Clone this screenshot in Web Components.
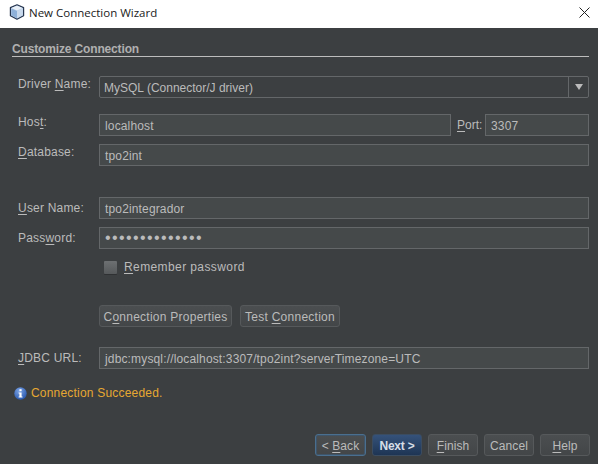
<!DOCTYPE html>
<html>
<head>
<meta charset="utf-8">
<title>New Connection Wizard</title>
<style>
  html, body { margin: 0; padding: 0; background: #3c3f41; }
  body { font-family: "Liberation Sans", Arial, sans-serif; font-size: 12px; color: #bbbbbb; }
  u { text-underline-offset: 2px; }
</style>
</head>
<body>
<template id="title-bar-tpl">
  <style>
    :host { display: flex; align-items: center; box-sizing: border-box; height: 28px; background: #fff; color: #1a1a1a; padding: 0 8px 4px 9px;
      font: 11.5px "Open Sans", "Noto Sans", sans-serif; }
    svg.logo { width: 16px; height: 16px; margin-right: 4px; }
    .name { flex: 1; }
    svg.close { width: 11px; height: 11px; }
  </style>
  <svg class="logo" viewBox="0 0 16 16">
    <path d="M8 .8 14.6 3.6V11.8L8 15.2 1.4 11.8V3.6Z" fill="#b9cfe8" stroke="#27364f" stroke-width="1.2" stroke-linejoin="round"/>
    <path d="M8 1.8 13.6 4 8 6.4 2.4 4Z" fill="#e9f0f8"/>
    <path d="M8 6.9V14.2L2.4 11.3V4.6Z" fill="#8eb0d8"/>
    <path d="M8 6.9V14.2L13.6 11.3V4.6Z" fill="#c9d9ec"/>
  </svg>
  <span class="name"><slot></slot></span>
  <svg class="close" viewBox="0 0 11 11"><path d="M.5.5 10.5 10.5M10.5.5.5 10.5" stroke="#222" stroke-width="1" fill="none"/></svg>
</template>

<template id="section-head-tpl">
  <style>
    :host { display: block; font-weight: bold; color: #b0b0b0; line-height: 14px; height: 14px; border-bottom: 1px solid #bdbdbd; letter-spacing: -.15px; }
  </style>
  <slot></slot>
</template>

<template id="form-row-tpl">
  <style>
    :host { display: flex; align-items: center; height: 22px; }
    .label { width: 87px; flex: none; padding-left: 6px; box-sizing: border-box; letter-spacing: .2px; }
    :host([raised]) .label { padding-bottom: 6px; }
    .body { flex: 1; display: flex; align-items: center; min-width: 0; }
  </style>
  <div class="label"><slot name="label"></slot></div>
  <div class="body"><slot></slot></div>
</template>

<template id="text-box-tpl">
  <style>
    :host { display: block; flex: 1; box-sizing: border-box; height: 22px; line-height: 22px; padding-left: 5px;
      background: #45494a; border: 1px solid #646769; color: #bbbbbb; white-space: nowrap; overflow: hidden; letter-spacing: .15px; }
    :host([secret]) { letter-spacing: 1.4px; font-size: 16px; line-height: 20px; }
  </style>
  <slot></slot>
</template>

<template id="combo-box-tpl">
  <style>
    :host { display: flex; flex: 1; box-sizing: border-box; height: 22px; background: #3c3f41; border: 1px solid #646769; border-radius: 2px; color: #bbbbbb; }
    .value { flex: 1; line-height: 22px; padding-left: 4px; }
    .arrow { width: 19px; border-left: 1px solid #646769; display: flex; align-items: center; justify-content: center; }
    .arrow svg { width: 8px; height: 6px; }
  </style>
  <div class="value"><slot></slot></div>
  <div class="arrow"><svg viewBox="0 0 8 6"><path d="M0 0H8L4 6Z" fill="#bbbbbb"/></svg></div>
</template>

<template id="wiz-button-tpl">
  <style>
    :host { display: inline-flex; align-items: center; justify-content: center; box-sizing: border-box; height: 22px; padding-top: 1px;
      background: linear-gradient(#4b4e50, #434648); border: 1px solid #56595b; border-radius: 3px; color: #bbbbbb; white-space: nowrap;
      letter-spacing: var(--track, .25px); }
    :host([focused]) { border: 1px solid #4a6f8f; box-shadow: inset 0 0 0 1px #3f5468; }
    :host([primary]) { background: linear-gradient(#35527a, #1e3554); border-color: #3b4c60; color: #d6dde6; font-weight: bold; letter-spacing: -.2px; }
  </style>
  <span><slot></slot></span>
</template>

<template id="check-line-tpl">
  <style>
    :host { display: flex; align-items: center; height: 16px; padding-left: 5px; letter-spacing: .4px; }
    .box { width: 13px; height: 13px; border-radius: 1px; margin-right: 7px; background: linear-gradient(#6d7072, #56595b); box-shadow: 0 1px 0 #2f3133; }
  </style>
  <span class="box"></span><slot></slot>
</template>

<template id="status-line-tpl">
  <style>
    :host { display: flex; align-items: center; height: 16px; color: #e6a832; letter-spacing: .2px; }
    svg { width: 13px; height: 13px; margin-right: 4px; }
  </style>
  <svg viewBox="0 0 13 13">
    <defs><radialGradient id="ball" cx=".4" cy=".3" r=".8"><stop offset="0" stop-color="#7ea6e6"/><stop offset="1" stop-color="#1f4fa8"/></radialGradient></defs>
    <circle cx="6.5" cy="6.5" r="6.2" fill="url(#ball)"/>
    <rect x="5.4" y="2.2" width="2.2" height="2" fill="#fff"/>
    <path d="M4.6 5.4H7.6V9.4H8.5V10.6H4.6V9.4H5.4V6.6H4.6Z" fill="#fff"/>
  </svg>
  <slot></slot>
</template>

<template id="wizard-dialog-tpl">
  <style>
    :host { display: flex; flex-direction: column; width: 598px; height: 464px; background: #3c3f41; overflow: hidden; }
    .main { flex: 1; display: flex; flex-direction: column; padding: 14px 9px 8px 12px; }
  </style>
  <slot name="title"></slot>
  <div class="main">
    <slot></slot>
  </div>
</template>

<wizard-dialog>
  <title-bar slot="title">New Connection Wizard</title-bar>

  <section-head>Customize Connection</section-head>

  <form-row raised style="margin-top:19px">
    <span slot="label">Driver <u>N</u>ame:</span>
    <combo-box>MySQL (Connector/J driver)</combo-box>
  </form-row>
  <form-row raised style="margin-top:16px">
    <span slot="label">Hos<u>t</u>:</span>
    <text-box>localhost</text-box>
    <span style="width:28px;margin-left:6px;white-space:nowrap"><u>P</u>ort:</span>
    <text-box style="flex:none;width:104px">3307</text-box>
  </form-row>
  <form-row raised style="margin-top:8px">
    <span slot="label"><u>D</u>atabase:</span>
    <text-box>tpo2int</text-box>
  </form-row>
  <form-row style="margin-top:31px">
    <span slot="label"><u>U</u>ser Name:</span>
    <text-box>tpo2integrador</text-box>
  </form-row>
  <form-row style="margin-top:8px">
    <span slot="label">Pass<u>w</u>ord:</span>
    <text-box secret>••••••••••••••</text-box>
  </form-row>
  <form-row style="margin-top:10px;height:16px">
    <check-line><u>R</u>emember password</check-line>
  </form-row>
  <form-row style="margin-top:30px">
    <div style="display:flex;gap:8px">
      <wiz-button style="width:133px">C<u>o</u>nnection Properties</wiz-button>
      <wiz-button style="width:100px">Test <u>C</u>onnection</wiz-button>
    </div>
  </form-row>
  <form-row style="margin-top:20px">
    <span slot="label"><u>J</u>DBC URL:</span>
    <text-box>jdbc:mysql://localhost:3307/tpo2int?serverTimezone=UTC</text-box>
  </form-row>
  <status-line style="margin-top:16px;margin-left:2px">Connection Succeeded.</status-line>

  <div style="flex:1"></div>
  <div style="display:flex;justify-content:flex-end;gap:6px;margin-right:-1px;--track:.1px">
    <wiz-button focused style="width:51px">&lt; <u>B</u>ack</wiz-button>
    <wiz-button primary style="width:50px">Next &gt;</wiz-button>
    <wiz-button style="width:50px"><u>F</u>inish</wiz-button>
    <wiz-button style="width:50px">Cancel</wiz-button>
    <wiz-button style="width:50px"><u>H</u>elp</wiz-button>
  </div>
</wizard-dialog>

<script>
  // every element just clones its template into an open shadow root
  const tags = ['title-bar', 'section-head', 'form-row', 'text-box', 'combo-box', 'wiz-button', 'check-line', 'status-line', 'wizard-dialog'];

  tags.forEach((tag) => {
    const tpl = document.getElementById(`${tag}-tpl`);
    customElements.define(tag, class extends HTMLElement {
      constructor() {
        super();
        this.attachShadow({ mode: 'open' });
        this.shadowRoot.appendChild(tpl.content.cloneNode(true));
      }
    });
  });
</script>
</body>
</html>
